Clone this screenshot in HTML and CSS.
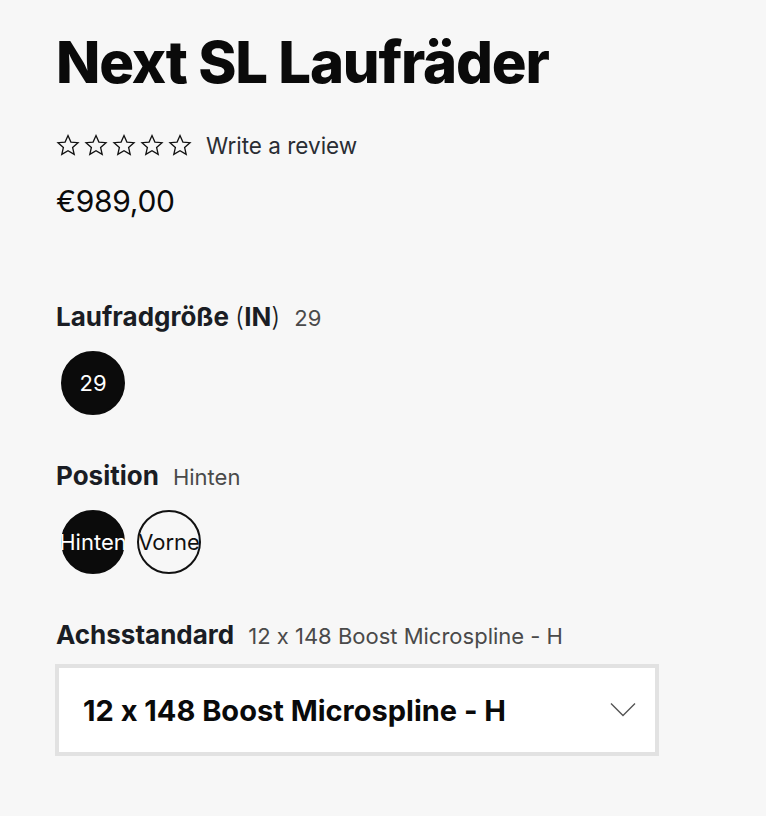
FILE: index.html
```html
<!DOCTYPE html>
<html lang="de">
<head>
<meta charset="utf-8">
<link rel="stylesheet" href="styles.css">
</head>
<body>
<main class="product">
  <h1 class="title">Next SL Laufräder</h1>
  <div class="rating">
    <div class="stars">
      <svg viewBox="0 0 24 24" class="star"><path d="M12 2.5l2.9 6.6 7.1.6-5.4 4.7 1.6 7-6.2-3.7-6.2 3.7 1.6-7L2 9.7l7.1-.6z"/></svg>
      <svg viewBox="0 0 24 24" class="star"><path d="M12 2.5l2.9 6.6 7.1.6-5.4 4.7 1.6 7-6.2-3.7-6.2 3.7 1.6-7L2 9.7l7.1-.6z"/></svg>
      <svg viewBox="0 0 24 24" class="star"><path d="M12 2.5l2.9 6.6 7.1.6-5.4 4.7 1.6 7-6.2-3.7-6.2 3.7 1.6-7L2 9.7l7.1-.6z"/></svg>
      <svg viewBox="0 0 24 24" class="star"><path d="M12 2.5l2.9 6.6 7.1.6-5.4 4.7 1.6 7-6.2-3.7-6.2 3.7 1.6-7L2 9.7l7.1-.6z"/></svg>
      <svg viewBox="0 0 24 24" class="star"><path d="M12 2.5l2.9 6.6 7.1.6-5.4 4.7 1.6 7-6.2-3.7-6.2 3.7 1.6-7L2 9.7l7.1-.6z"/></svg>
    </div>
    <span class="review">Write a review</span>
  </div>
  <div class="price">€989,00</div>

  <section class="option option-first">
    <div class="label"><span class="name">Laufradgröße <span class="paren">(</span>IN<span class="paren">)</span></span><span class="value">29</span></div>
    <div class="swatches">
      <button class="swatch selected">29</button>
    </div>
  </section>

  <section class="option">
    <div class="label"><span class="name">Position</span><span class="value">Hinten</span></div>
    <div class="swatches">
      <button class="swatch selected">Hinten</button>
      <button class="swatch">Vorne</button>
    </div>
  </section>

  <section class="option">
    <div class="label"><span class="name">Achsstandard</span><span class="value">12 x 148 Boost Microspline - H</span></div>
    <div class="select">
      <span class="select-text">12 x 148 Boost Microspline - H</span>
      <svg class="chevron" viewBox="0 0 26 16"><path d="M1 1.5l12 12 12-12"/></svg>
    </div>
  </section>
</main>
</body>
</html>
```
FILE: styles.css
```css
html, body {
  margin: 0;
  padding: 0;
  background: #f7f7f7;
}
body {
  font-family: Inter, "Open Sans", sans-serif;
  font-feature-settings: "calt" 0;
  color: #0a0a0a;
}
.product {
  padding: 24px 0 0 56px;
}
.title {
  margin: 0;
  font-size: 58px;
  font-weight: 800;
  letter-spacing: -1.2px;
  line-height: 76px;
}
.rating {
  display: flex;
  align-items: center;
  margin-top: 31px;
  height: 28px;
}
.stars {
  display: flex;
  gap: 4px;
}
.star {
  width: 24px;
  height: 24px;
  fill: none;
  stroke: #111;
  stroke-width: 1.3;
  stroke-linejoin: miter;
}
.review {
  margin-left: 14px;
  font-size: 22.5px;
  color: #2a2d33;
}
.price {
  margin-top: 25px;
  font-size: 30px;
  letter-spacing: -0.3px;
  line-height: 34px;
}
.option {
  margin-top: 46px;
}
.option-first {
  margin-top: 84px;
}
.label {
  display: flex;
  align-items: baseline;
  gap: 14px;
  line-height: 30px;
}
.name {
  font-size: 26px;
  font-weight: 700;
  color: #1a1d24;
}
.paren {
  font-weight: 300;
}
.value {
  font-size: 22px;
  color: #4a4a4a;
}
.swatches {
  display: flex;
  gap: 12px;
  margin-top: 18px;
  padding-left: 5px;
}
.swatch {
  width: 64px;
  height: 64px;
  border-radius: 50%;
  border: 2px solid #111;
  background: transparent;
  color: #111;
  font-family: inherit;
  font-feature-settings: "calt" 0;
  font-size: 22px;
  padding: 0;
  display: flex;
  align-items: center;
  justify-content: center;
  overflow: visible;
  white-space: nowrap;
}
.swatch.selected {
  background: #0b0b0b;
  color: #fff;
  border-color: #0b0b0b;
}
.select {
  margin-top: 13px;
  width: 604px;
  height: 92px;
  box-sizing: border-box;
  border: 4px solid #e2e2e2;
  background: #fff;
  display: flex;
  align-items: center;
  justify-content: space-between;
  padding: 0 19px 0 24px;
  margin-left: -1px;
}
.select-text {
  font-size: 29px;
  font-weight: 700;
}
.chevron {
  width: 26px;
  height: 16px;
  fill: none;
  stroke: #555;
  stroke-width: 1.4;
}
```
